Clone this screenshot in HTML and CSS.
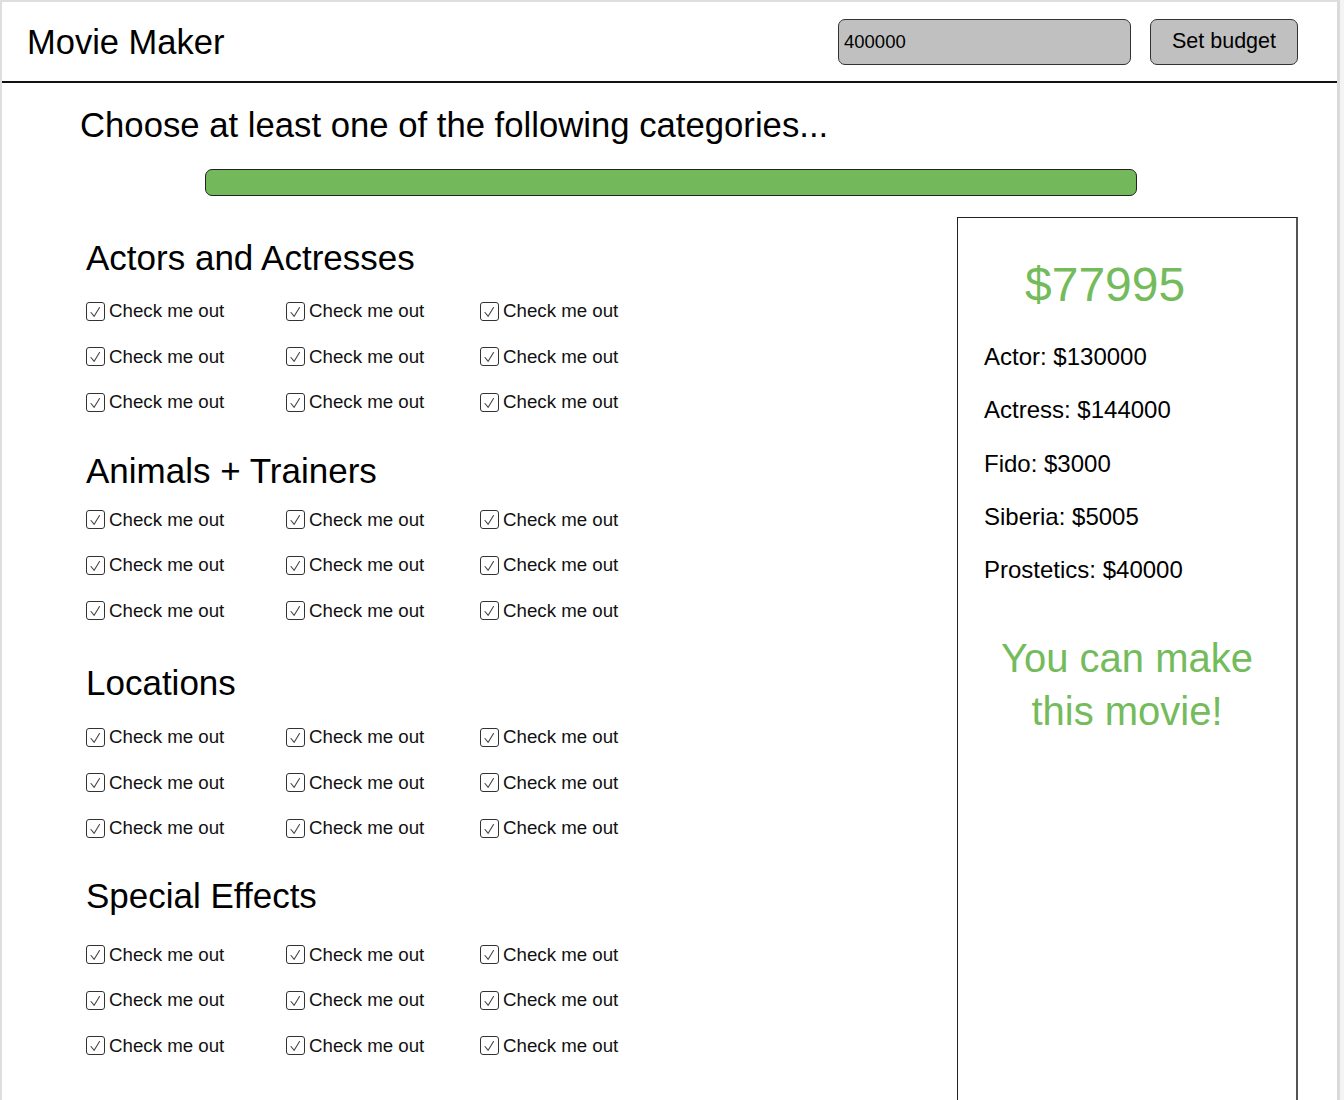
FILE: index.html
```html
<!DOCTYPE html>
<html lang="en">
<head>
<meta charset="utf-8">
<title>Movie Maker</title>
<link rel="stylesheet" href="styles.css">
</head>
<body>
<div class="window">
  <header class="topbar">
    <h1 class="brand">Movie Maker</h1>
    <div class="budget">
      <input class="budget-input" type="text" value="400000">
      <button class="budget-btn" type="button">Set budget</button>
    </div>
  </header>

  <main class="content">
    <h2 class="prompt">Choose at least one of the following categories...</h2>
    <div class="progress"></div>

    <div class="columns">
      <div class="categories">
        <section class="category sec-1">
          <h3 class="cat-title">Actors and Actresses</h3>
          <div class="options">
            <label class="opt"><span class="box"><svg viewBox="0 0 17 17"><polyline points="4,9.5 7.2,13.3 12.5,4.5"/></svg></span>Check me out</label>
            <label class="opt"><span class="box"><svg viewBox="0 0 17 17"><polyline points="4,9.5 7.2,13.3 12.5,4.5"/></svg></span>Check me out</label>
            <label class="opt"><span class="box"><svg viewBox="0 0 17 17"><polyline points="4,9.5 7.2,13.3 12.5,4.5"/></svg></span>Check me out</label>
            <label class="opt"><span class="box"><svg viewBox="0 0 17 17"><polyline points="4,9.5 7.2,13.3 12.5,4.5"/></svg></span>Check me out</label>
            <label class="opt"><span class="box"><svg viewBox="0 0 17 17"><polyline points="4,9.5 7.2,13.3 12.5,4.5"/></svg></span>Check me out</label>
            <label class="opt"><span class="box"><svg viewBox="0 0 17 17"><polyline points="4,9.5 7.2,13.3 12.5,4.5"/></svg></span>Check me out</label>
            <label class="opt"><span class="box"><svg viewBox="0 0 17 17"><polyline points="4,9.5 7.2,13.3 12.5,4.5"/></svg></span>Check me out</label>
            <label class="opt"><span class="box"><svg viewBox="0 0 17 17"><polyline points="4,9.5 7.2,13.3 12.5,4.5"/></svg></span>Check me out</label>
            <label class="opt"><span class="box"><svg viewBox="0 0 17 17"><polyline points="4,9.5 7.2,13.3 12.5,4.5"/></svg></span>Check me out</label>
          </div>
        </section>

        <section class="category sec-2">
          <h3 class="cat-title">Animals + Trainers</h3>
          <div class="options">
            <label class="opt"><span class="box"><svg viewBox="0 0 17 17"><polyline points="4,9.5 7.2,13.3 12.5,4.5"/></svg></span>Check me out</label>
            <label class="opt"><span class="box"><svg viewBox="0 0 17 17"><polyline points="4,9.5 7.2,13.3 12.5,4.5"/></svg></span>Check me out</label>
            <label class="opt"><span class="box"><svg viewBox="0 0 17 17"><polyline points="4,9.5 7.2,13.3 12.5,4.5"/></svg></span>Check me out</label>
            <label class="opt"><span class="box"><svg viewBox="0 0 17 17"><polyline points="4,9.5 7.2,13.3 12.5,4.5"/></svg></span>Check me out</label>
            <label class="opt"><span class="box"><svg viewBox="0 0 17 17"><polyline points="4,9.5 7.2,13.3 12.5,4.5"/></svg></span>Check me out</label>
            <label class="opt"><span class="box"><svg viewBox="0 0 17 17"><polyline points="4,9.5 7.2,13.3 12.5,4.5"/></svg></span>Check me out</label>
            <label class="opt"><span class="box"><svg viewBox="0 0 17 17"><polyline points="4,9.5 7.2,13.3 12.5,4.5"/></svg></span>Check me out</label>
            <label class="opt"><span class="box"><svg viewBox="0 0 17 17"><polyline points="4,9.5 7.2,13.3 12.5,4.5"/></svg></span>Check me out</label>
            <label class="opt"><span class="box"><svg viewBox="0 0 17 17"><polyline points="4,9.5 7.2,13.3 12.5,4.5"/></svg></span>Check me out</label>
          </div>
        </section>

        <section class="category sec-3">
          <h3 class="cat-title">Locations</h3>
          <div class="options">
            <label class="opt"><span class="box"><svg viewBox="0 0 17 17"><polyline points="4,9.5 7.2,13.3 12.5,4.5"/></svg></span>Check me out</label>
            <label class="opt"><span class="box"><svg viewBox="0 0 17 17"><polyline points="4,9.5 7.2,13.3 12.5,4.5"/></svg></span>Check me out</label>
            <label class="opt"><span class="box"><svg viewBox="0 0 17 17"><polyline points="4,9.5 7.2,13.3 12.5,4.5"/></svg></span>Check me out</label>
            <label class="opt"><span class="box"><svg viewBox="0 0 17 17"><polyline points="4,9.5 7.2,13.3 12.5,4.5"/></svg></span>Check me out</label>
            <label class="opt"><span class="box"><svg viewBox="0 0 17 17"><polyline points="4,9.5 7.2,13.3 12.5,4.5"/></svg></span>Check me out</label>
            <label class="opt"><span class="box"><svg viewBox="0 0 17 17"><polyline points="4,9.5 7.2,13.3 12.5,4.5"/></svg></span>Check me out</label>
            <label class="opt"><span class="box"><svg viewBox="0 0 17 17"><polyline points="4,9.5 7.2,13.3 12.5,4.5"/></svg></span>Check me out</label>
            <label class="opt"><span class="box"><svg viewBox="0 0 17 17"><polyline points="4,9.5 7.2,13.3 12.5,4.5"/></svg></span>Check me out</label>
            <label class="opt"><span class="box"><svg viewBox="0 0 17 17"><polyline points="4,9.5 7.2,13.3 12.5,4.5"/></svg></span>Check me out</label>
          </div>
        </section>

        <section class="category sec-4">
          <h3 class="cat-title">Special Effects</h3>
          <div class="options">
            <label class="opt"><span class="box"><svg viewBox="0 0 17 17"><polyline points="4,9.5 7.2,13.3 12.5,4.5"/></svg></span>Check me out</label>
            <label class="opt"><span class="box"><svg viewBox="0 0 17 17"><polyline points="4,9.5 7.2,13.3 12.5,4.5"/></svg></span>Check me out</label>
            <label class="opt"><span class="box"><svg viewBox="0 0 17 17"><polyline points="4,9.5 7.2,13.3 12.5,4.5"/></svg></span>Check me out</label>
            <label class="opt"><span class="box"><svg viewBox="0 0 17 17"><polyline points="4,9.5 7.2,13.3 12.5,4.5"/></svg></span>Check me out</label>
            <label class="opt"><span class="box"><svg viewBox="0 0 17 17"><polyline points="4,9.5 7.2,13.3 12.5,4.5"/></svg></span>Check me out</label>
            <label class="opt"><span class="box"><svg viewBox="0 0 17 17"><polyline points="4,9.5 7.2,13.3 12.5,4.5"/></svg></span>Check me out</label>
            <label class="opt"><span class="box"><svg viewBox="0 0 17 17"><polyline points="4,9.5 7.2,13.3 12.5,4.5"/></svg></span>Check me out</label>
            <label class="opt"><span class="box"><svg viewBox="0 0 17 17"><polyline points="4,9.5 7.2,13.3 12.5,4.5"/></svg></span>Check me out</label>
            <label class="opt"><span class="box"><svg viewBox="0 0 17 17"><polyline points="4,9.5 7.2,13.3 12.5,4.5"/></svg></span>Check me out</label>
          </div>
        </section>
      </div>

      <aside class="summary">
        <div class="remaining">$77995</div>
        <ul class="costs">
          <li>Actor: $130000</li>
          <li>Actress: $144000</li>
          <li>Fido: $3000</li>
          <li>Siberia: $5005</li>
          <li>Prostetics: $40000</li>
        </ul>
        <p class="verdict">You can make<br>this movie!</p>
      </aside>
    </div>
  </main>
</div>
</body>
</html>
```

FILE: styles.css
```css
* {
  box-sizing: border-box;
}

html, body {
  margin: 0;
  padding: 0;
}

body {
  background: #f4f4f4;
  font-family: "Liberation Sans", Arial, Helvetica, sans-serif;
  color: #000;
  overflow: hidden;
}

.window {
  width: 1340px;
  height: 1100px;
  background: #fff;
  border-left: 2px solid #dedede;
  border-top: 2px solid #dedede;
  border-right: 3px solid #dadada;
  overflow: hidden;
}

/* Header */
.topbar {
  height: 81px;
  border-bottom: 2px solid #111;
  display: flex;
  align-items: center;
  justify-content: space-between;
  padding: 0 39px 0 25px;
}

.brand {
  margin: 0;
  font-size: 34.5px;
  font-weight: normal;
  line-height: 40px;
}

.budget {
  display: flex;
  align-items: center;
  gap: 19px;
}

.budget-input {
  width: 293px;
  height: 46px;
  background: #c0c0c0;
  border: 1px solid #333;
  border-radius: 7px;
  padding: 0 5px;
  font-family: inherit;
  font-size: 18.5px;
  color: #000;
  outline: none;
}

.budget-btn {
  width: 148px;
  height: 46px;
  background: #c0c0c0;
  border: 1px solid #333;
  border-radius: 7px;
  font-family: inherit;
  font-size: 21.5px;
  color: #000;
  padding: 0;
}

/* Content */
.content {
  padding-top: 22px;
}

.prompt {
  margin: 0 0 0 78px;
  font-size: 34.7px;
  font-weight: normal;
  line-height: 40px;
}

.progress {
  margin: 24px 0 0 203px;
  width: 932px;
  height: 27px;
  background: #73b95b;
  border: 1px solid #222;
  border-radius: 7px;
}

.columns {
  display: flex;
  align-items: flex-start;
  margin-top: 21px;
}

.categories {
  flex: 1;
  padding: 21px 0 0 84px;
}

.category {
  margin-bottom: 35.5px;
}

.cat-title {
  margin: 0;
  font-size: 35px;
  font-weight: normal;
  line-height: 40px;
}

.options {
  margin-top: 20px;
  display: grid;
  grid-template-columns: 200px 194px auto;
  grid-auto-rows: 26px;
  row-gap: 19.5px;
}

.sec-2 { margin-bottom: 39.5px; }
.sec-2 .options { margin-top: 16px; }
.sec-3 { margin-bottom: 34.5px; }
.sec-3 .options { margin-top: 21px; }
.sec-4 .options { margin-top: 26px; }

.opt {
  display: flex;
  align-items: center;
  gap: 4px;
  font-size: 18.7px;
  color: #111;
  white-space: nowrap;
}

.box {
  width: 19px;
  height: 19px;
  border: 1px solid #333;
  border-radius: 3px;
  display: block;
  flex: none;
  background: #fff;
}

.box svg {
  display: block;
  width: 17px;
  height: 17px;
}

.box polyline {
  fill: none;
  stroke: #444;
  stroke-width: 1.1;
  stroke-linejoin: round;
  stroke-linecap: round;
}

/* Summary */
.summary {
  width: 341px;
  min-height: 900px;
  margin-right: 39px;
  border: 1px solid #222;
  border-right: 2px solid #555;
  padding-top: 39px;
}

.remaining {
  padding-left: 67px;
  font-size: 48px;
  line-height: 56px;
  color: #74bb5c;
}

.costs {
  list-style: none;
  margin: 17px 0 0;
  padding: 0 0 0 26px;
}

.costs li {
  font-size: 24px;
  line-height: 53.25px;
  color: #000;
}

.verdict {
  margin: 36px 0 0;
  text-align: center;
  font-size: 40px;
  line-height: 53px;
  color: #74bb5c;
}
```
